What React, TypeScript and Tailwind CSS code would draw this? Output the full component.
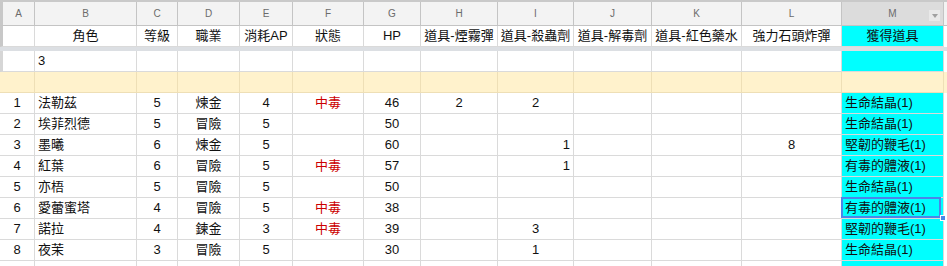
import { ReactNode } from "react";

// column widths A..M plus the sliver after M
const cols = [
  "w-[35px]", "w-[102px]", "w-[41px]", "w-[62px]", "w-[53px]", "w-[71px]", "w-[57px]",
  "w-[77px]", "w-[76px]", "w-[78px]", "w-[90px]", "w-[100px]", "w-[102px]",
];
const letters = ["A", "B", "C", "D", "E", "F", "G", "H", "I", "J", "K", "L", "M"];
const titles = ["", "角色", "等級", "職業", "消耗AP", "狀態", "HP", "道具-煙霧彈", "道具-殺蟲劑", "道具-解毒劑", "道具-紅色藥水", "強力石頭炸彈", "獲得道具"];

type Align = "l" | "c" | "r";
type Row = {
  n: number; name: string; lv: number; job: string; ap: number; st?: string; hp: number;
  h?: string; i?: string; iAlign?: Align; l?: string; loot: string; sel?: boolean;
};

const rows: Row[] = [
  { n: 1, name: "法勒茲", lv: 5, job: "煉金", ap: 4, st: "中毒", hp: 46, h: "2", i: "2", iAlign: "c", loot: "生命結晶(1)" },
  { n: 2, name: "埃菲烈德", lv: 5, job: "冒險", ap: 5, hp: 50, loot: "生命結晶(1)" },
  { n: 3, name: "墨曦", lv: 6, job: "煉金", ap: 5, hp: 60, i: "1", iAlign: "r", l: "8", loot: "堅韌的鞭毛(1)" },
  { n: 4, name: "紅葉", lv: 6, job: "冒險", ap: 5, st: "中毒", hp: 57, i: "1", iAlign: "r", loot: "有毒的體液(1)" },
  { n: 5, name: "亦梧", lv: 5, job: "冒險", ap: 5, hp: 50, loot: "生命結晶(1)" },
  { n: 6, name: "愛蕾蜜塔", lv: 4, job: "冒險", ap: 5, st: "中毒", hp: 38, loot: "有毒的體液(1)", sel: true },
  { n: 7, name: "諾拉", lv: 4, job: "鍊金", ap: 3, st: "中毒", hp: 39, i: "3", iAlign: "c", loot: "堅韌的鞭毛(1)" },
  { n: 8, name: "夜茉", lv: 3, job: "冒險", ap: 5, hp: 30, i: "1", iAlign: "c", loot: "生命結晶(1)" },
];

const alignCls: Record<Align, string> = { l: "justify-start", c: "justify-center", r: "justify-end" };

function Cell({ c, align = "c", className = "", children }: { c: number; align?: Align; className?: string; children?: ReactNode }) {
  return (
    <div className={`relative flex shrink-0 items-center whitespace-nowrap border-r border-b px-[3px] ${cols[c]} ${alignCls[align]} ${className}`}>
      {children}
    </div>
  );
}

export default function App() {
  return (
    <div
      className="h-[266px] w-[947px] overflow-hidden bg-white text-[13px] text-[#111]"
      style={{ fontFamily: '"Liberation Sans", Arial, "Noto Sans CJK TC", sans-serif' }}
    >
      {/* column letters */}
      <div className="flex h-[26px] border-t-2 border-[#c9c9c9] bg-[#f3f3f3]">
        {letters.map((l, c) => (
          <Cell
            key={l}
            c={c}
            className={`border-[#c4c4c4] text-[10px] text-[#6b6b6b] ${c === 12 ? "bg-[#dcdcdc]" : ""} ${c === 0 ? "border-l-[3px] border-l-[#c8c8c8]" : ""}`}
          >
            {l}
            {c === 12 && (
              <span className="absolute right-[3px] top-[8px] flex h-[11px] w-[11px] items-center justify-center bg-[#e9e9e9]">
                <span className="h-0 w-0 border-x-[3px] border-t-[4px] border-x-transparent border-t-[#a0a0a0]" />
              </span>
            )}
          </Cell>
        ))}
        <div className="flex-1 border-b border-[#c4c4c4] bg-[#f3f3f3]" />
      </div>

      {/* field names */}
      <div className="flex h-[21px]">
        {titles.map((t, c) => (
          <Cell
            key={c}
            c={c}
            className={`border-[#dadada] ${c === 12 ? "bg-[#00ffff]" : ""} ${c === 0 ? "border-l-[3px] border-l-[#c8c8c8]" : ""}`}
          >
            {t}
          </Cell>
        ))}
      </div>

      {/* frozen-row divider */}
      <div className="h-[4px] bg-[#dcdfe3]" />

      {/* count row */}
      <div className="flex h-[21px]">
        {cols.map((_, c) => (
          <Cell key={c} c={c} align={c === 1 ? "l" : "c"} className={`border-[#dadada] ${c === 12 ? "bg-[#00ffff]" : ""} ${c === 0 ? "border-l-[3px] border-l-[#d6d6d6]" : ""}`}>
            {c === 1 ? "3" : ""}
          </Cell>
        ))}
      </div>

      {/* highlighted spacer row */}
      <div className="flex h-[21px] bg-[#fff2cc]">
        {cols.map((_, c) => (
          <Cell key={c} c={c} className="border-[#eedfb6]" />
        ))}
      </div>

      {rows.map((r) => {
        const vals: [ReactNode, Align][] = [
          [r.n, "c"],
          [r.name, "l"],
          [r.lv, "c"],
          [r.job, "c"],
          [r.ap, "c"],
          [r.st ? <span className="text-[#cc0000]">{r.st}</span> : "", "c"],
          [r.hp, "c"],
          [r.h ?? "", "c"],
          [r.i ?? "", r.iAlign ?? "c"],
          ["", "c"],
          ["", "c"],
          [r.l ?? "", "c"],
          [r.loot, "l"],
        ];
        return (
          <div key={r.n} className="flex h-[21px]">
            {vals.map(([v, a], c) => (
              <Cell key={c} c={c} align={a} className={`border-[#dadada] ${c === 12 ? "bg-[#00ffff]" : ""}`}>
                {v}
                {c === 12 && r.sel && (
                  <>
                    <span className="absolute -left-px -top-px bottom-0 right-[2px] border-2 border-[#4a86e8]" />
                    <span className="absolute -bottom-[3px] right-[-3px] z-10 h-[6px] w-[6px] border border-white bg-[#4a86e8]" />
                  </>
                )}
              </Cell>
            ))}
          </div>
        );
      })}

      {/* next row, cut off */}
      <div className="flex h-[21px]">
        {cols.map((_, c) => (
          <Cell key={c} c={c} className={`border-[#dadada] ${c === 12 ? "bg-[#00ffff]" : ""}`} />
        ))}
      </div>
    </div>
  );
}
